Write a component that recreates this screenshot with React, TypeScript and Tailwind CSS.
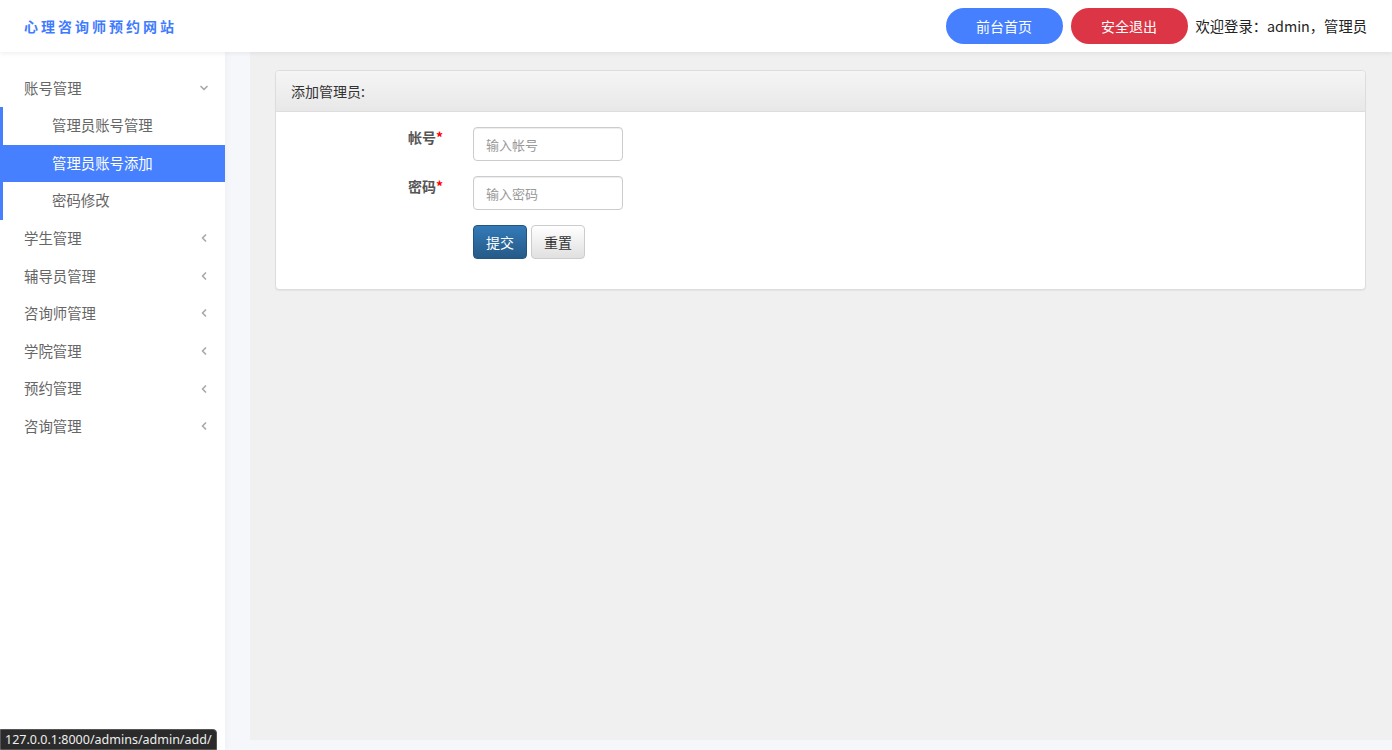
import { ChevronDown, ChevronLeft } from "lucide-react";

const menus = ["学生管理", "辅导员管理", "咨询师管理", "学院管理", "预约管理", "咨询管理"];
const subMenus = ["管理员账号管理", "管理员账号添加", "密码修改"];

export default function App() {
  return (
    <div
      className="relative flex h-[750px] w-[1392px] flex-col overflow-hidden bg-white text-sm text-[#333]"
      style={{ fontFamily: '"Microsoft YaHei", "Noto Sans CJK SC", "Liberation Sans", sans-serif' }}
    >
      {/* header */}
      <header className="relative z-10 flex h-[52px] shrink-0 items-center justify-between bg-white pl-6 pr-[25px] shadow-[0_2px_4px_rgba(0,0,0,0.06)]">
        <div className="text-sm font-bold tracking-[3px] text-[#3f7bff]">心理咨询师预约网站</div>
        <div className="flex items-center">
          <button className="h-9 w-[117px] rounded-full bg-[#4680ff] text-sm text-white">前台首页</button>
          <button className="ml-2 h-9 w-[117px] rounded-full bg-[#dc3545] text-sm text-white">安全退出</button>
          <span className="ml-2 text-[14.3px] text-[#222]">欢迎登录：admin，管理员</span>
        </div>
      </header>

      <div className="flex min-h-0 flex-1">
        {/* sidebar */}
        <aside className="relative z-[5] w-[225px] shrink-0 bg-white pt-[17px] text-[14.4px] shadow-[2px_0_6px_rgba(0,0,0,0.03)]">
          <div className="flex h-[38px] items-center justify-between pl-6 pr-[15px] text-[#666]">
            <span>账号管理</span>
            <ChevronDown size={12} strokeWidth={3.5} className="text-[#aaa]" />
          </div>
          <div className="border-l-[3px] border-[#4680ff]">
            {subMenus.map((m) => (
              <div
                key={m}
                className={`flex h-[37.5px] items-center pl-[49px] ${
                  m === "管理员账号添加" ? "bg-[#4680ff] text-white" : "text-[#666]"
                }`}
              >
                {m}
              </div>
            ))}
          </div>
          {menus.map((m) => (
            <div key={m} className="flex h-[37.6px] items-center justify-between pl-6 pr-[15px] text-[#666]">
              <span>{m}</span>
              <ChevronLeft size={12} strokeWidth={3.5} className="text-[#aaa]" />
            </div>
          ))}
        </aside>

        {/* main */}
        <main className="flex-1 bg-[#f5f7fa] pb-[10px] pl-[25px]">
          <div className="h-full bg-[#f0f0f0] pl-[25px] pr-[26px] pt-[18px]">
            <div className="rounded border border-[#ddd] bg-white shadow-[0_1px_1px_rgba(0,0,0,0.05)]">
              <div className="flex h-[41px] items-center rounded-t border-b border-[#ddd] bg-gradient-to-b from-[#f5f5f5] to-[#e8e8e8] px-[15px] text-sm text-[#333]">
                添加管理员:
              </div>
              <div className="pb-[30px] pt-[15px]">
                <div className="flex items-start">
                  <label className="w-[167px] text-right text-sm font-bold text-[#555]">
                    帐号<span className="text-[#f00]">*</span>
                  </label>
                  <input
                    placeholder="输入帐号"
                    className="ml-[30px] h-[34px] w-[150px] rounded border border-[#ccc] px-3 text-[13px] shadow-[inset_0_1px_1px_rgba(0,0,0,0.075)] placeholder:text-[#999]"
                  />
                </div>
                <div className="mt-[15px] flex items-start">
                  <label className="w-[167px] text-right text-sm font-bold text-[#555]">
                    密码<span className="text-[#f00]">*</span>
                  </label>
                  <input
                    placeholder="输入密码"
                    className="ml-[30px] h-[34px] w-[150px] rounded border border-[#ccc] px-3 text-[13px] shadow-[inset_0_1px_1px_rgba(0,0,0,0.075)] placeholder:text-[#999]"
                  />
                </div>
                <div className="mt-[15px] flex pl-[197px]">
                  <button className="h-[34px] w-[54px] rounded border border-[#245580] bg-gradient-to-b from-[#337ab7] to-[#265a88] text-sm text-white">
                    提交
                  </button>
                  <button className="ml-1 h-[34px] w-[54px] rounded border border-[#ccc] bg-gradient-to-b from-white to-[#e0e0e0] text-sm text-[#333]">
                    重置
                  </button>
                </div>
              </div>
            </div>
          </div>
        </main>
      </div>

      {/* browser status bar */}
      <div
        className="absolute bottom-0 left-0 z-20 flex h-[21px] items-center rounded-tr-sm border border-[#555] bg-[#2b2b2b] px-1 text-[12.5px] text-[#eee]"
        style={{ fontFamily: '"Segoe UI", "Noto Sans", "Liberation Sans", sans-serif' }}
      >
        127.0.0.1:8000/admins/admin/add/
      </div>
    </div>
  );
}
